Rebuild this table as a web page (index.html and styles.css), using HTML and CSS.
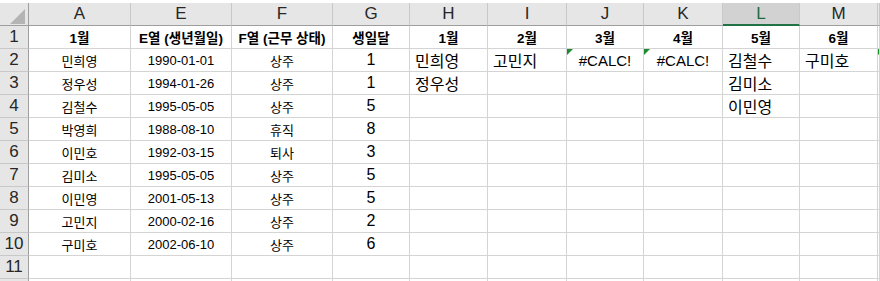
FILE: index.html
```html
<!DOCTYPE html>
<html lang="ko">
<head>
<meta charset="utf-8">
<link rel="stylesheet" href="styles.css">
</head>
<body>
<div class="sheet">
  <div class="corner"><span class="corner-tri"></span></div>
  <div class="ch">A</div><div class="ch">E</div><div class="ch">F</div><div class="ch">G</div><div class="ch">H</div><div class="ch">I</div><div class="ch">J</div><div class="ch">K</div><div class="ch sel">L</div><div class="ch">M</div><div class="ch"></div>

  <div class="rh">1</div>
  <div class="c b">1월</div><div class="c b">E열 (생년월일)</div><div class="c b">F열 (근무 상태)</div><div class="c b">생일달</div><div class="c b">1월</div><div class="c b">2월</div><div class="c b">3월</div><div class="c b">4월</div><div class="c b">5월</div><div class="c b">6월</div><div class="c"></div>

  <div class="rh">2</div>
  <div class="c">민희영</div><div class="c">1990-01-01</div><div class="c">상주</div><div class="c num">1</div><div class="c big">민희영</div><div class="c big">고민지</div><div class="c err"><span class="tri"></span>#CALC!</div><div class="c err"><span class="tri"></span>#CALC!</div><div class="c big">김철수</div><div class="c big">구미호</div><div class="c"><span class="tri"></span></div>

  <div class="rh">3</div>
  <div class="c">정우성</div><div class="c">1994-01-26</div><div class="c">상주</div><div class="c num">1</div><div class="c big">정우성</div><div class="c"></div><div class="c"></div><div class="c"></div><div class="c big">김미소</div><div class="c"></div><div class="c"></div>

  <div class="rh">4</div>
  <div class="c">김철수</div><div class="c">1995-05-05</div><div class="c">상주</div><div class="c num">5</div><div class="c"></div><div class="c"></div><div class="c"></div><div class="c"></div><div class="c big">이민영</div><div class="c"></div><div class="c"></div>

  <div class="rh">5</div>
  <div class="c">박영희</div><div class="c">1988-08-10</div><div class="c">휴직</div><div class="c num">8</div><div class="c"></div><div class="c"></div><div class="c"></div><div class="c"></div><div class="c"></div><div class="c"></div><div class="c"></div>

  <div class="rh">6</div>
  <div class="c">이민호</div><div class="c">1992-03-15</div><div class="c">퇴사</div><div class="c num">3</div><div class="c"></div><div class="c"></div><div class="c"></div><div class="c"></div><div class="c"></div><div class="c"></div><div class="c"></div>

  <div class="rh">7</div>
  <div class="c">김미소</div><div class="c">1995-05-05</div><div class="c">상주</div><div class="c num">5</div><div class="c"></div><div class="c"></div><div class="c"></div><div class="c"></div><div class="c"></div><div class="c"></div><div class="c"></div>

  <div class="rh">8</div>
  <div class="c">이민영</div><div class="c">2001-05-13</div><div class="c">상주</div><div class="c num">5</div><div class="c"></div><div class="c"></div><div class="c"></div><div class="c"></div><div class="c"></div><div class="c"></div><div class="c"></div>

  <div class="rh">9</div>
  <div class="c">고민지</div><div class="c">2000-02-16</div><div class="c">상주</div><div class="c num">2</div><div class="c"></div><div class="c"></div><div class="c"></div><div class="c"></div><div class="c"></div><div class="c"></div><div class="c"></div>

  <div class="rh">10</div>
  <div class="c">구미호</div><div class="c">2002-06-10</div><div class="c">상주</div><div class="c num">6</div><div class="c"></div><div class="c"></div><div class="c"></div><div class="c"></div><div class="c"></div><div class="c"></div><div class="c"></div>

  <div class="rh">11</div>
  <div class="c"></div><div class="c"></div><div class="c"></div><div class="c"></div><div class="c"></div><div class="c"></div><div class="c"></div><div class="c"></div><div class="c"></div><div class="c"></div><div class="c"></div>

  <div class="rh"></div>
  <div class="c"></div><div class="c"></div><div class="c"></div><div class="c"></div><div class="c"></div><div class="c"></div><div class="c"></div><div class="c"></div><div class="c"></div><div class="c"></div><div class="c"></div>
</div>
</body>
</html>
```

FILE: styles.css
```css
html, body {
  margin: 0;
  padding: 0;
  background: #ffffff;
  overflow: hidden;
  height: 281px;
}

.sheet {
  display: grid;
  grid-template-columns: 29px 102px 101px 101px 77px 78px 79px 77px 79px 77px 78px 1fr;
  grid-auto-rows: 23px;
  padding-top: 3px;
  font-family: "Liberation Sans", "Noto Sans CJK KR", sans-serif;
  color: #000;
}

.sheet > div {
  box-sizing: border-box;
  display: flex;
  align-items: center;
  justify-content: center;
  white-space: nowrap;
  overflow: hidden;
  position: relative;
}

.corner {
  background: #e6e6e6;
  border-right: 1px solid #9e9e9e;
  border-bottom: 1px solid #9e9e9e;
}

.sheet > .corner {
  justify-content: flex-end;
  align-items: flex-end;
  padding: 0 3px 1px 0;
}

.corner-tri {
  display: block;
  width: 15px;
  height: 15px;
  background: #b4b4b4;
  clip-path: polygon(100% 0, 100% 100%, 0 100%);
}

.ch {
  background: #e6e6e6;
  border-right: 1px solid #c8c8c8;
  border-bottom: 1px solid #9e9e9e;
  font-size: 17px;
  color: #262626;
}

.ch.sel {
  background: #d2d2d2;
  border-bottom: 2px solid #217346;
  color: #1d6b3f;
}

.rh {
  background: #e6e6e6;
  border-right: 1px solid #9e9e9e;
  border-bottom: 1px solid #c8c8c8;
  font-size: 17px;
  color: #262626;
}

.c {
  border-right: 1px solid #d4d4d4;
  border-bottom: 1px solid #d4d4d4;
  font-size: 13px;
}

.b {
  font-weight: 700;
  font-size: 13.5px;
}

.num {
  font-size: 16px;
}

.sheet > .big {
  justify-content: flex-start;
  padding-left: 5px;
  font-size: 16px;
}

.err {
  font-size: 15px;
}

.tri {
  position: absolute;
  top: 0;
  left: 0;
  width: 6px;
  height: 6px;
  background: #1f8a2e;
  clip-path: polygon(0 0, 100% 0, 0 100%);
}
```
